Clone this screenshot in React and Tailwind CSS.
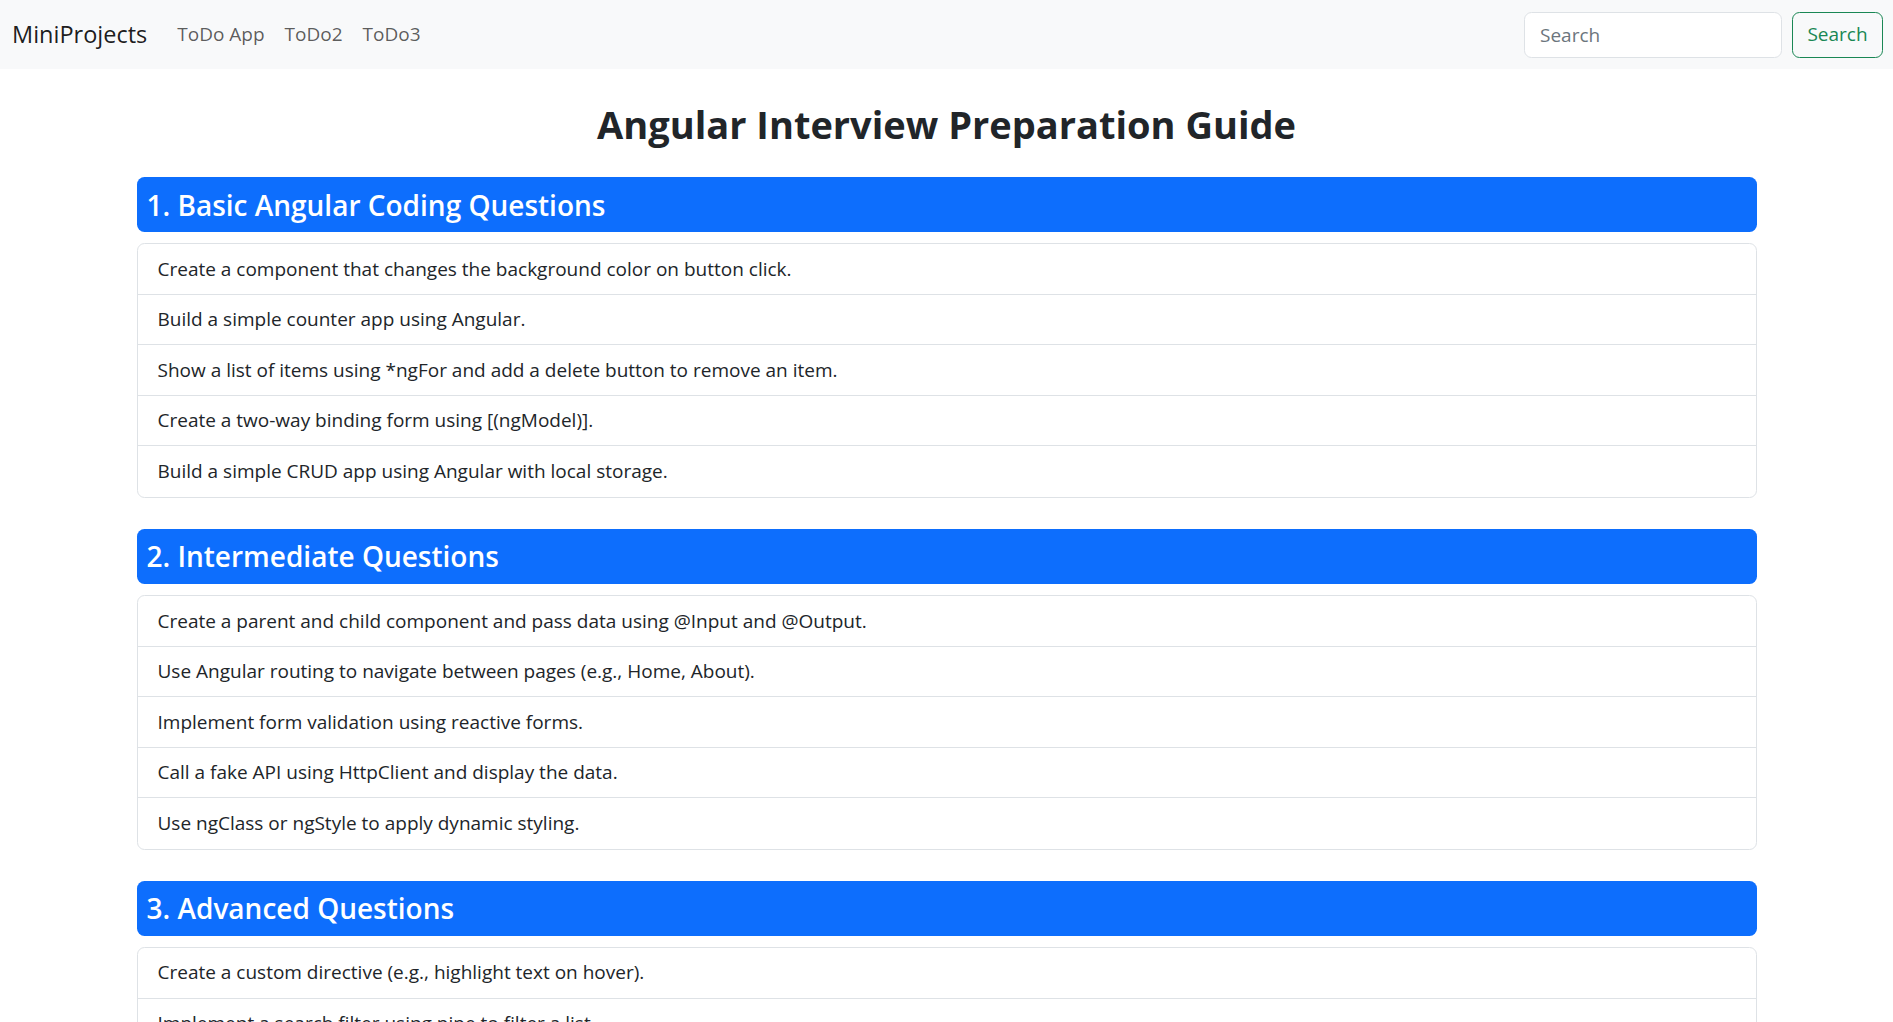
import { useState } from "react";

const FONT = { fontFamily: '"Open Sans", "Noto Sans", Arial, sans-serif' };

const sections = [
  {
    title: "1. Basic Angular Coding Questions",
    items: [
      "Create a component that changes the background color on button click.",
      "Build a simple counter app using Angular.",
      "Show a list of items using *ngFor and add a delete button to remove an item.",
      "Create a two-way binding form using [(ngModel)].",
      "Build a simple CRUD app using Angular with local storage.",
    ],
  },
  {
    title: "2. Intermediate Questions",
    items: [
      "Create a parent and child component and pass data using @Input and @Output.",
      "Use Angular routing to navigate between pages (e.g., Home, About).",
      "Implement form validation using reactive forms.",
      "Call a fake API using HttpClient and display the data.",
      "Use ngClass or ngStyle to apply dynamic styling.",
    ],
  },
  {
    title: "3. Advanced Questions",
    items: [
      "Create a custom directive (e.g., highlight text on hover).",
      "Implement a search filter using pipe to filter a list.",
      "Lazy load a feature module using Angular routing.",
      "Use a service with BehaviorSubject to share state between components.",
      "Write unit tests for a component using Jasmine and Karma.",
    ],
  },
];

function Navbar() {
  const [query, setQuery] = useState("");
  return (
    <nav className="h-[69px] bg-[#f8f9fa] flex items-center justify-between pl-[12px] pr-[10px]">
      <div className="flex items-center">
        <a href="#" className="text-[23.5px] text-black/90 mr-[20px] leading-none">
          MiniProjects
        </a>
        <ul className="flex items-center">
          {["ToDo App", "ToDo2", "ToDo3"].map((l) => (
            <li key={l}>
              <a href="#" className="block px-[10px] text-[19px] text-black/65">
                {l}
              </a>
            </li>
          ))}
        </ul>
      </div>
      <form className="flex items-center" onSubmit={(e) => e.preventDefault()}>
        <input
          type="search"
          value={query}
          onChange={(e) => setQuery(e.target.value)}
          placeholder="Search"
          className="w-[258px] h-[46px] mr-[10px] px-[15px] bg-white border border-[#dee2e6] rounded-[7.5px] text-[19px] text-[#212529] placeholder:text-[#6c757d] outline-none"
        />
        <button className="w-[91px] h-[46px] border border-[#198754] text-[#198754] rounded-[7.5px] text-[19px]">
          Search
        </button>
      </form>
    </nav>
  );
}

function Section({ title, items }) {
  return (
    <section className="mb-[31px]">
      <h4 className="h-[55px] flex items-center px-[10px] bg-[#0d6efd] text-white rounded-[7.5px] text-[28px] font-semibold mb-[11px]">
        {title}
      </h4>
      <ul className="border border-[#dee2e6] rounded-[7.5px] bg-white">
        {items.map((item, i) => (
          <li
            key={item}
            className={`h-[50.6px] flex items-center px-[20px] text-[19px] text-[#212529] ${
              i < items.length - 1 ? "border-b border-[#dee2e6]" : ""
            }`}
          >
            {item}
          </li>
        ))}
      </ul>
    </section>
  );
}

export default function App() {
  return (
    <div className="min-h-screen bg-white" style={FONT}>
      <Navbar />
      <main className="w-[1620px] mx-auto">
        <h1 className="text-center font-bold text-[38px] leading-[60px] text-[#212529] pt-[25px] mb-[23px]">
          Angular Interview Preparation Guide
        </h1>
        {sections.map((s) => (
          <Section key={s.title} {...s} />
        ))}
      </main>
    </div>
  );
}
